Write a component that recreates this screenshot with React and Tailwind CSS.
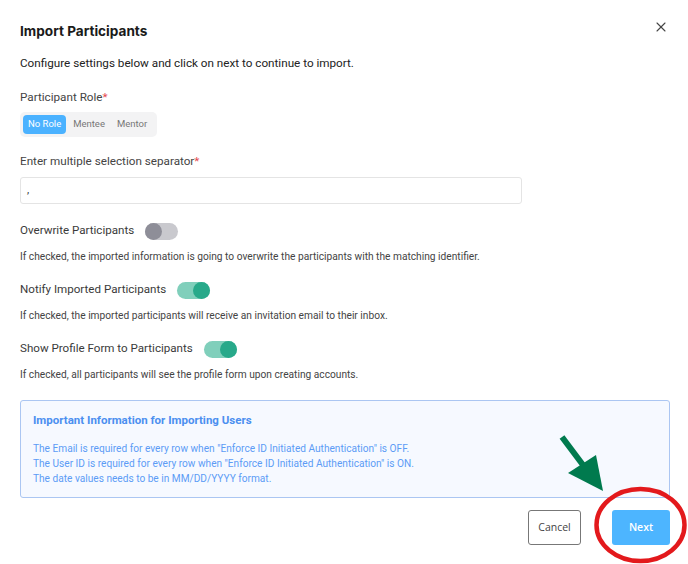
import { X } from 'lucide-react';

const Toggle = ({ on }) => (
  <div
    className={`relative w-[33px] h-[17px] rounded-full ${on ? 'bg-[#80cfbb]' : 'bg-[#c9c9ce]'}`}
  >
    <div
      className={`absolute top-0 w-[17px] h-[17px] rounded-full ${
        on ? 'right-0 bg-[#28a98a]' : 'left-0 bg-[#8e8e98]'
      }`}
    />
  </div>
);

const ToggleRow = ({ label, on, desc, className = '' }) => (
  <div className={className}>
    <div className="flex items-center gap-[11px] h-[18px]">
      <span className="text-[11.6px] text-[#3a3a3a]">{label}</span>
      <Toggle on={on} />
    </div>
    <p className="mt-[10px] text-[10.2px] leading-[14px] text-[#444]">{desc}</p>
  </div>
);

const App = () => {
  return (
    <div
      className="relative w-[688px] h-[564px] bg-white px-5 pt-[21px] overflow-hidden"
      style={{ fontFamily: 'Roboto, "Noto Sans", sans-serif' }}
    >
      <div className="flex items-center justify-between h-5">
        <h1
          className="text-[13.6px] font-bold text-[#1a1a1a]"
          style={{ fontFamily: 'Inter, Roboto, sans-serif' }}
        >
          Import Participants
        </h1>
        <X className="w-[16px] h-[16px] text-[#444] -mr-[1px] -mt-2" strokeWidth={1.6} />
      </div>

      <p className="mt-[14px] text-[11.7px] leading-4 text-[#222]">
        Configure settings below and click on next to continue to import.
      </p>

      <p className="mt-[18px] text-[11.7px] leading-4 text-[#444]">
        Participant Role<span className="text-[#e5484d]">*</span>
      </p>
      <div className="mt-[7px] inline-flex items-center h-[25px] w-[137px] rounded-[5px] bg-[#f3f3f4] px-[3px] gap-[2px]">
        <span className="h-[19px] px-[5px] flex items-center rounded-[4px] bg-[#4bb2ff] text-white text-[9.5px]">
          No Role
        </span>
        <span className="px-[5px] text-[9.5px] text-[#777]">Mentee</span>
        <span className="px-[5px] text-[9.5px] text-[#777]">Mentor</span>
      </div>

      <p className="mt-[16px] text-[11.7px] leading-4 text-[#444]">
        Enter multiple selection separator<span className="text-[#e5484d]">*</span>
      </p>
      <div className="mt-2 w-[502px] h-[27px] rounded-[3px] border border-[#e4e4e4] flex items-center px-[6px] text-[11px] text-[#333]">
        ,
      </div>

      <ToggleRow
        className="mt-[18px]"
        label="Overwrite Participants"
        on={false}
        desc="If checked, the imported information is going to overwrite the participants with the matching identifier."
      />
      <ToggleRow
        className="mt-[17px]"
        label="Notify Imported Participants"
        on
        desc="If checked, the imported participants will receive an invitation email to their inbox."
      />
      <ToggleRow
        className="mt-[17px]"
        label="Show Profile Form to Participants"
        on
        desc="If checked, all participants will see the profile form upon creating accounts."
      />

      <div className="mt-[18px] w-[650px] h-[98px] rounded-[3px] border border-[#abc6f2] bg-[#f6f9ff] px-3 pt-[11px]">
        <p className="text-[11.5px] font-bold leading-4 text-[#4b8ff0]">
          Important Information for Importing Users
        </p>
        <div className="mt-[13px] text-[10.15px] leading-[15px] text-[#5c9cf6]">
          <p>The Email is required for every row when "Enforce ID Initiated Authentication" is OFF.</p>
          <p>The User ID is required for every row when "Enforce ID Initiated Authentication" is ON.</p>
          <p>The date values needs to be in MM/DD/YYYY format.</p>
        </div>
      </div>

      <div
        className="mt-3 w-[650px] flex justify-end gap-[31px]"
        style={{ fontFamily: '"Open Sans", "Noto Sans", sans-serif' }}
      >
        <button className="w-[53px] h-[35px] rounded-[3px] border border-[#777] bg-white text-[10.5px] text-[#444]">
          Cancel
        </button>
        <button className="w-[58px] h-[35px] rounded-[3px] bg-[#4db5ff] text-[10.5px] font-semibold text-white">
          Next
        </button>
      </div>

      <svg
        className="absolute left-0 top-0 pointer-events-none"
        width="688"
        height="564"
        viewBox="0 0 688 564"
      >
        <line x1="562" y1="437" x2="586" y2="469" stroke="#007a4e" strokeWidth="6" />
        <polygon points="568,473 596,455 603,491" fill="#007a4e" />
        <ellipse
          cx="640.5"
          cy="525"
          rx="44"
          ry="36"
          fill="none"
          stroke="#e3191c"
          strokeWidth="4.5"
        />
      </svg>
    </div>
  );
};

export default App;
